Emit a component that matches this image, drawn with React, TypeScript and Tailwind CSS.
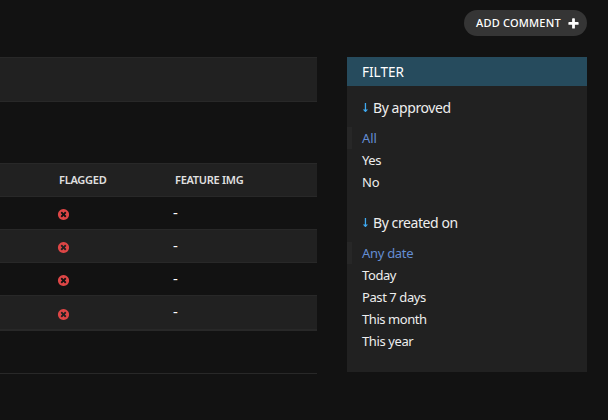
import React from 'react';

function CrossIcon() {
  return (
    <svg className="block size-[13px]" viewBox="0 0 1792 1792" fill="#dd4646">
      <path d="M1277 1122q0-26-19-45l-181-181 181-181q19-19 19-45 0-27-19-46l-90-90q-19-18-46-18-26 0-45 18l-181 181-181-181q-19-18-45-18-27 0-46 18l-90 90q-19 19-19 46 0 26 19 45l181 181-181 181q-19 19-19 45 0 27 19 46l90 90q19 18 46 18 26 0 45-18l181-181 181 181q19 18 45 18 27 0 46-18l90-90q19-19 19-46zm387-226q0 209-103 385.5t-279.5 279.5-385.5 103-385.5-103-279.5-279.5-103-385.5 103-385.5 279.5-279.5 385.5-103 385.5 103 279.5 279.5 103 385.5z" />
    </svg>
  );
}

function PlusIcon() {
  return (
    <svg className="block size-[13px]" viewBox="0 0 1792 1792" fill="#fff">
      <path d="M1600 796v192q0 40-28 68t-68 28h-416v416q0 40-28 68t-68 28h-192q-40 0-68-28t-28-68v-416h-416q-40 0-68-28t-28-68v-192q0-40 28-68t68-28h416v-416q0-40 28-68t68-28h192q40 0 68 28t28 68v416h416q40 0 68 28t28 68z" />
    </svg>
  );
}

type Item = { label: string; tracking: string };

function FilterGroup({ title, tracking, items }: { title: string; tracking: string; items: Item[] }) {
  return (
    <section className="pt-[11px]">
      <h3 className="mb-2 flex h-5 items-center gap-[4px] pl-[15px] text-[14px] text-[#eee]">
        <svg className="block h-[11px] w-[7px]" viewBox="0 0 7 11">
          <path fill="#3fa9f0" d="M2.8 1h1.3v6.5H6L3.8 10h-.7L.8 7.5h2z" />
        </svg>
        <span className={tracking}>{title}</span>
      </h3>
      <ul className="mb-2 pt-0.5">
        {items.map((item, i) => (
          <li
            key={item.label}
            className={
              i === 0
                ? 'flex h-[22px] items-center border-l-[5px] border-[#272727] pl-[10px] text-[#648dd4]'
                : 'flex h-[22px] items-center pl-[15px] text-[#eee]'
            }
          >
            <span className={`text-[13px] leading-[22px] ${item.tracking}`}>{item.label}</span>
          </li>
        ))}
      </ul>
    </section>
  );
}

const rows = [
  'h-[33px] border-b bg-[#121212]',
  'h-[33px] border-b bg-[#212121]',
  'h-[33px] border-b bg-[#121212]',
  'h-[35px] border-b-2 bg-[#212121]',
];

export default function App() {
  return (
    <div className="h-[420px] w-[608px] overflow-hidden bg-[#121212] pt-[10px] font-['Noto_Sans','Open_Sans',sans-serif] text-white">
      <div className="mr-[21px] flex justify-end">
        <a className="flex h-[26px] w-[123px] items-center justify-between rounded-full bg-[#353535] pr-[7px] pl-[12px]">
          <span className="text-[11px] font-medium tracking-[0.2px] whitespace-nowrap">ADD COMMENT</span>
          <PlusIcon />
        </a>
      </div>
      <div className="mt-[21px] flex gap-[30px]">
        <main className="w-[317px]">
          <div className="h-[45px] border-y border-[#282828] bg-[#212121]" />
          <div className="mt-[61px]">
            <div className="flex h-[34px] items-center border-y border-[#282828] bg-[#212121] pl-[59px] text-[11px] font-semibold text-[#e0e0e0]">
              <span className="w-[116px] tracking-[-0.25px]">FLAGGED</span>
              <span className="tracking-[-0.28px]">FEATURE IMG</span>
            </div>
            {rows.map((row, i) => (
              <div key={i} className={`flex items-center border-[#282828] pl-[57px] ${row}`}>
                <div className="w-[116px] pt-[3px]">
                  <CrossIcon />
                </div>
                <span className="pb-[3px] text-[15px] leading-4">-</span>
              </div>
            ))}
          </div>
          <div className="h-[43px] border-b border-[#282828]" />
        </main>
        <aside className="h-[315px] w-[240px] bg-[#212121]">
          <h2 className="h-[29px] bg-[#264b5d] pl-[15px] text-[13.5px] leading-[31px]">FILTER</h2>
          <FilterGroup
            title="By approved"
            tracking="tracking-[-0.42px]"
            items={[
              { label: 'All', tracking: 'tracking-[-0.1px]' },
              { label: 'Yes', tracking: 'tracking-[-0.4px]' },
              { label: 'No', tracking: 'tracking-[-0.1px]' },
            ]}
          />
          <FilterGroup
            title="By created on"
            tracking="tracking-[-0.42px]"
            items={[
              { label: 'Any date', tracking: 'tracking-[-0.3px]' },
              { label: 'Today', tracking: 'tracking-[-0.4px]' },
              { label: 'Past 7 days', tracking: 'tracking-[-0.42px]' },
              { label: 'This month', tracking: 'tracking-[-0.43px]' },
              { label: 'This year', tracking: 'tracking-[-0.4px]' },
            ]}
          />
        </aside>
      </div>
    </div>
  );
}
